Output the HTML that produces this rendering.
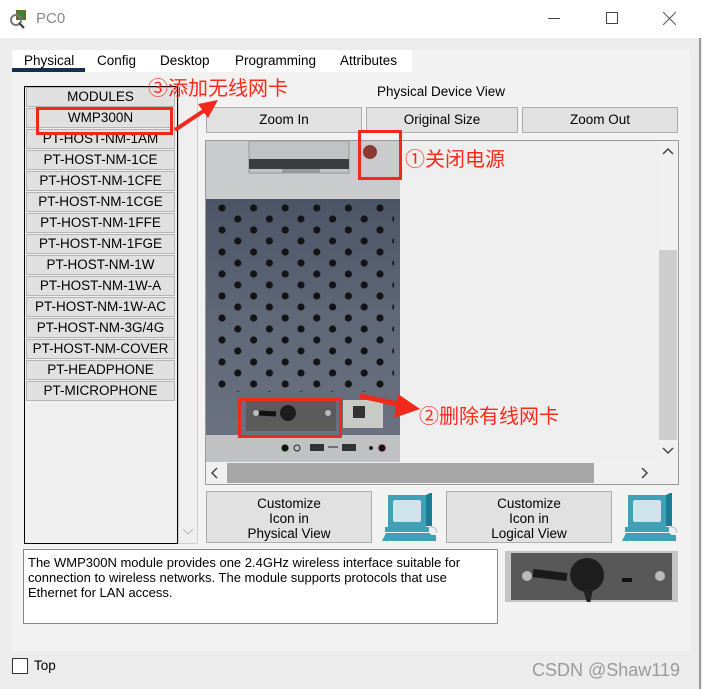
<!DOCTYPE html>
<html><head><meta charset="utf-8"><style>
*{margin:0;padding:0;box-sizing:border-box}
body{width:702px;height:689px;background:#ececec;position:relative;overflow:hidden;font-family:"Liberation Sans",Arial,sans-serif;font-size:13px;color:#000}
.a{position:absolute}
.tb{left:0;top:0;width:702px;height:38px;background:#fff}
.panel{left:12px;top:50px;width:678px;height:601px;background:#f2f2f2}
.tabs{left:12px;top:50px;width:400px;height:22px;background:#fff}
.tab{top:53px;font-size:13.5px}
.list{left:24px;top:86px;width:154px;height:458px;border:1px solid #000;background:#efefef}
.vs{left:178px;top:86px;width:20px;height:458px;background:#efefef;border:1px solid #d0d0d0}
.it{left:26px;width:149px;height:20px;background:#e0e0e0;border:1px solid #b4b4b4;text-align:center;line-height:18px;font-size:13.5px}
.btn{background:#e1e1e1;border:1px solid #adadad;text-align:center;font-size:13.5px}
.red{color:#ff2a1a;font-family:"Liberation Sans","Noto Sans CJK SC",sans-serif;font-size:20px;line-height:24px}
.rb{border:3px solid #f2281a}
</style></head><body>
<div class="a tb"></div>
<svg class="a" style="left:10px;top:8px" width="22" height="22" viewBox="0 0 22 22"><rect x="6" y="2" width="10" height="10" fill="#6b6a2a"/><rect x="8" y="4" width="6" height="6" fill="#2f8a3a"/><circle cx="6" cy="12" r="5" fill="none" stroke="#777" stroke-width="2"/><line x1="9" y1="15" x2="14" y2="20" stroke="#333" stroke-width="2"/></svg>
<div class="a" style="left:36px;top:10px;font-size:15px;color:#888">PC0</div>
<div class="a" style="left:548px;top:18px;width:12px;height:1px;background:#444"></div>
<div class="a" style="left:606px;top:12px;width:12px;height:12px;border:1px solid #444"></div>
<svg class="a" style="left:663px;top:12px" width="13" height="13"><path d="M0 0L13 13M13 0L0 13" stroke="#555" stroke-width="1"/></svg>
<div class="a" style="left:699px;top:38px;width:2px;height:651px;background:#999"></div>

<div class="a panel"></div>
<div class="a tabs"></div>
<div class="a tab" style="left:24px">Physical</div>
<div class="a" style="left:12px;top:68px;width:73px;height:4px;background:#15304f"></div>
<div class="a tab" style="left:97px">Config</div>
<div class="a tab" style="left:160px">Desktop</div>
<div class="a tab" style="left:235px">Programming</div>
<div class="a tab" style="left:340px">Attributes</div>

<div class="a list"></div>
<div class="a vs"></div>
<svg class="a" style="left:182px;top:528px" width="12" height="8"><path d="M1 1L6 6L11 1" stroke="#bbb" fill="none"/></svg>
<div class="a it" style="top:87px">MODULES</div>
<div class="a it" style="top:108px">WMP300N</div>
<div class="a it" style="top:129px">PT-HOST-NM-1AM</div>
<div class="a it" style="top:150px">PT-HOST-NM-1CE</div>
<div class="a it" style="top:171px">PT-HOST-NM-1CFE</div>
<div class="a it" style="top:192px">PT-HOST-NM-1CGE</div>
<div class="a it" style="top:213px">PT-HOST-NM-1FFE</div>
<div class="a it" style="top:234px">PT-HOST-NM-1FGE</div>
<div class="a it" style="top:255px">PT-HOST-NM-1W</div>
<div class="a it" style="top:276px">PT-HOST-NM-1W-A</div>
<div class="a it" style="top:297px">PT-HOST-NM-1W-AC</div>
<div class="a it" style="top:318px">PT-HOST-NM-3G/4G</div>
<div class="a it" style="top:339px">PT-HOST-NM-COVER</div>
<div class="a it" style="top:360px">PT-HEADPHONE</div>
<div class="a it" style="top:381px">PT-MICROPHONE</div>

<div class="a" style="left:377px;top:84px;font-size:13.5px">Physical Device View</div>
<div class="a btn" style="left:206px;top:107px;width:156px;height:26px;line-height:24px">Zoom In</div>
<div class="a btn" style="left:366px;top:107px;width:152px;height:26px;line-height:24px">Original Size</div>
<div class="a btn" style="left:522px;top:107px;width:156px;height:26px;line-height:24px">Zoom Out</div>

<div class="a" style="left:205px;top:140px;width:474px;height:345px;border:1px solid #999;background:#efefef"></div>
<div class="a" style="left:658px;top:141px;width:20px;height:321px;background:#f0f0f0"></div>
<div class="a" style="left:659px;top:250px;width:18px;height:190px;background:#cdcdcd"></div>
<svg class="a" style="left:662px;top:147px" width="12" height="8"><path d="M1 7L6 2L11 7" stroke="#444" fill="none" stroke-width="1.5"/></svg>
<svg class="a" style="left:662px;top:447px" width="12" height="8"><path d="M1 1L6 6L11 1" stroke="#444" fill="none" stroke-width="1.5"/></svg>
<div class="a" style="left:206px;top:462px;width:472px;height:22px;background:#f0f0f0"></div>
<div class="a" style="left:227px;top:463px;width:367px;height:20px;background:#a6a6a6"></div>
<svg class="a" style="left:210px;top:467px" width="8" height="12"><path d="M7 1L2 6L7 11" stroke="#444" fill="none" stroke-width="1.5"/></svg>
<svg class="a" style="left:641px;top:467px" width="8" height="12"><path d="M1 1L6 6L1 11" stroke="#444" fill="none" stroke-width="1.5"/></svg>

<svg class="a" style="left:206px;top:141px" width="194" height="321" viewBox="0 0 194 321">
<defs>
<linearGradient id="g" x1="0" y1="0" x2="0" y2="1"><stop offset="0" stop-color="#4c5566"/><stop offset=".5" stop-color="#5f6877"/><stop offset="1" stop-color="#6a7180"/></linearGradient>
<pattern id="p" x="12" y="63" width="31.6" height="22" patternUnits="userSpaceOnUse"><circle cx="4" cy="4" r="3.6" fill="#141414"/><circle cx="19.8" cy="15" r="3.6" fill="#141414"/></pattern>
</defs>
<rect width="194" height="58" fill="#c9cbcd"/>
<rect x="43" y="0" width="100" height="32" fill="#c0c2c4" stroke="#999"/>
<rect x="43" y="18" width="100" height="10" fill="#3a3c3e"/>
<rect x="76" y="28" width="38" height="4" fill="#999"/>
<circle cx="164" cy="11" r="7" fill="#8a3a30"/>
<rect y="58" width="194" height="236" fill="url(#g)"/>
<rect x="12" y="63" width="176" height="188" fill="url(#p)"/>
<rect x="40" y="259" width="90" height="31" fill="#5b5b5b"/>
<circle cx="50" cy="272" r="3" fill="#bbb"/><circle cx="122" cy="272" r="3" fill="#bbb"/>
<path d="M53 272L70 273" stroke="#111" stroke-width="5"/><circle cx="82" cy="272" r="8" fill="#1c1c1c"/>
<rect x="137" y="259" width="40" height="28" fill="#c8cac6"/><rect x="147" y="265" width="12" height="12" fill="#333"/>
<rect y="294" width="194" height="27" fill="#bfc1c3"/>
<circle cx="79" cy="307" r="4" fill="#111" stroke="#9c9" /><circle cx="91" cy="307" r="3" fill="none" stroke="#222"/>
<rect x="104" y="303" width="14" height="7" fill="#333"/><rect x="136" y="303" width="14" height="7" fill="#333"/>
<path d="M122 306h10" stroke="#222"/><circle cx="165" cy="307" r="2" fill="#222"/><circle cx="176" cy="307" r="4" fill="#111" stroke="#d9a"/>
</svg>

<div class="a btn" style="left:206px;top:491px;width:166px;height:52px;line-height:15px;padding-top:4px">Customize<br>Icon in<br>Physical View</div>
<div class="a btn" style="left:446px;top:491px;width:166px;height:52px;line-height:15px;padding-top:4px">Customize<br>Icon in<br>Logical View</div>
<svg class="a" style="left:380px;top:493px" width="60" height="50" viewBox="0 0 60 50"><path d="M8 2h38l6-3v34H8z" fill="#1a7d93"/><rect x="8" y="2" width="38" height="32" fill="#3fa0b8"/><rect x="13" y="7" width="28" height="22" rx="2" fill="#cfe3ea"/><rect x="5" y="34" width="44" height="5" fill="#3fa0b8"/><path d="M2 48l4-8h44l4 8z" fill="#3fa0b8"/><path d="M50 34q8 0 6 6" stroke="#bbb" fill="none"/><rect x="48" y="42" width="8" height="6" fill="#3fa0b8"/></svg>
<svg class="a" style="left:620px;top:493px" width="60" height="50" viewBox="0 0 60 50"><path d="M8 2h38l6-3v34H8z" fill="#1a7d93"/><rect x="8" y="2" width="38" height="32" fill="#3fa0b8"/><rect x="13" y="7" width="28" height="22" rx="2" fill="#cfe3ea"/><rect x="5" y="34" width="44" height="5" fill="#3fa0b8"/><path d="M2 48l4-8h44l4 8z" fill="#3fa0b8"/><path d="M50 34q8 0 6 6" stroke="#bbb" fill="none"/><rect x="48" y="42" width="8" height="6" fill="#3fa0b8"/></svg>

<div class="a" style="left:23px;top:549px;width:475px;height:75px;background:#fff;border:1px solid #888;padding:5px 4px;font-size:13px;line-height:15px">The WMP300N module provides one 2.4GHz wireless interface suitable for connection to wireless networks. The module supports protocols that use Ethernet for LAN access.</div>
<svg class="a" style="left:505px;top:551px" width="173" height="51" viewBox="0 0 173 51"><rect width="173" height="51" fill="#c4c4c4"/><rect x="6" y="2" width="161" height="47" fill="#585858"/><circle cx="22" cy="25" r="5" fill="#bbb"/><circle cx="155" cy="25" r="5" fill="#bbb"/><path d="M28 22L62 26" stroke="#1a1a1a" stroke-width="8"/><circle cx="82" cy="24" r="17" fill="#1e1e1e"/><path d="M78 38l10 0-4 20z" fill="#222"/><rect x="117" y="27" width="10" height="4" fill="#111"/></svg>

<div class="a" style="left:12px;top:658px;width:16px;height:16px;border:1px solid #333;background:#fff"></div>
<div class="a" style="left:34px;top:658px;font-size:13.5px">Top</div>
<div class="a" style="left:532px;top:660px;font-size:18px;color:#9a9a9a">CSDN @Shaw119</div>

<div class="a rb" style="left:36px;top:107px;width:137px;height:28px"></div>
<div class="a rb" style="left:358px;top:130px;width:44px;height:50px"></div>
<div class="a rb" style="left:238px;top:398px;width:104px;height:40px"></div>
<div class="a red" style="left:148px;top:77px">③添加无线网卡</div>
<div class="a red" style="left:405px;top:148px">①关闭电源</div>
<div class="a red" style="left:419px;top:405px">②删除有线网卡</div>
<svg class="a" style="left:170px;top:90px" width="60" height="45"><path d="M5 40L35 20" stroke="#f2281a" stroke-width="4"/><path d="M48 10L28 14L38 28z" fill="#f2281a"/></svg>
<svg class="a" style="left:358px;top:392px" width="66" height="30"><path d="M2 4L40 12" stroke="#f2281a" stroke-width="5"/><path d="M62 17L40 2L36 26z" fill="#f2281a"/></svg>
</body></html>
